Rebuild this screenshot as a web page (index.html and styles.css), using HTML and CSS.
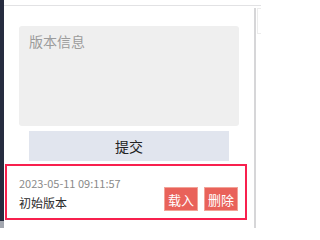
FILE: index.html
```html
<!DOCTYPE html>
<html lang="zh-CN">
<head>
<meta charset="utf-8">
<link rel="stylesheet" href="styles.css">
</head>
<body>
<div class="app">
  <div class="sidebar"><div class="sidebar-dark"></div><div class="sidebar-foot"></div></div>
  <div class="main">
    <div class="topline"></div>
    <div class="body">
      <div class="content">
        <textarea class="note" placeholder="版本信息"></textarea>
        <button class="submit">提交</button>
        <div class="card">
          <div class="info">
            <div class="date">2023-05-11 09:11:57</div>
            <div class="name">初始版本</div>
          </div>
          <div class="actions">
            <button class="act">载入</button>
            <button class="act">删除</button>
          </div>
        </div>
      </div>
      <div class="scrollbar"></div>
      <div class="rest"><div class="rest-box"></div></div>
    </div>
  </div>
</div>
</body>
</html>
```
FILE: styles.css
```css
html, body {
  margin: 0;
  padding: 0;
  background: #ffffff;
}
body {
  width: 261px;
  height: 228px;
  overflow: hidden;
  font-family: "Noto Sans CJK SC", "Noto Sans", sans-serif;
}
.app {
  display: flex;
  height: 228px;
}
.sidebar {
  width: 4px;
  display: flex;
  flex-direction: column;
}
.sidebar-dark {
  height: 221px;
  background: #262c3f;
}
.sidebar-foot {
  flex: 1;
  background: #a3a7b0;
}
.main {
  flex: 1;
  display: flex;
  flex-direction: column;
}
.topline {
  height: 5px;
  border-bottom: 1px solid #e2e2e4;
}
.body {
  flex: 1;
  display: flex;
}
.content {
  width: 250px;
  display: flex;
  flex-direction: column;
}
.note {
  margin: 20px 0 0 15px;
  width: 220px;
  height: 100px;
  box-sizing: border-box;
  border: none;
  border-radius: 3px;
  background: #efefef;
  padding: 5px 10px;
  font-family: inherit;
  font-size: 14px;
  line-height: 20px;
  resize: none;
  outline: none;
}
.note::placeholder {
  color: #9c9c9c;
}
.submit {
  margin: 5px 0 0 25px;
  width: 200px;
  height: 30px;
  border: none;
  background: #e1e5ee;
  font-family: inherit;
  font-size: 14px;
  color: #222;
  padding: 0;
}
.card {
  margin: 3px 0 0 1px;
  width: 242px;
  height: 56px;
  box-sizing: border-box;
  border: 2px solid #f8204e;
  display: flex;
  justify-content: space-between;
  padding: 10px 7px 7px 12px;
}
.info {
  display: flex;
  flex-direction: column;
}
.date {
  font-size: 11px;
  line-height: 14px;
  color: #8a8a8a;
}
.name {
  margin-top: 4px;
  font-size: 12px;
  line-height: 18px;
  color: #2a2a2a;
}
.actions {
  display: flex;
  align-items: flex-end;
  gap: 6px;
}
.act {
  width: 34px;
  height: 24px;
  box-sizing: border-box;
  border: 1px solid #f2a297;
  background: #e9625a;
  color: #ffffff;
  font-family: inherit;
  font-size: 13px;
  padding: 0;
}
.scrollbar {
  width: 2px;
  margin-top: 2px;
  background: #d6d6d8;
}
.rest {
  flex: 1;
  padding: 2px 0 0 1px;
}
.rest-box {
  height: 24px;
  border: 1px solid #ececec;
  border-right: none;
}
```
